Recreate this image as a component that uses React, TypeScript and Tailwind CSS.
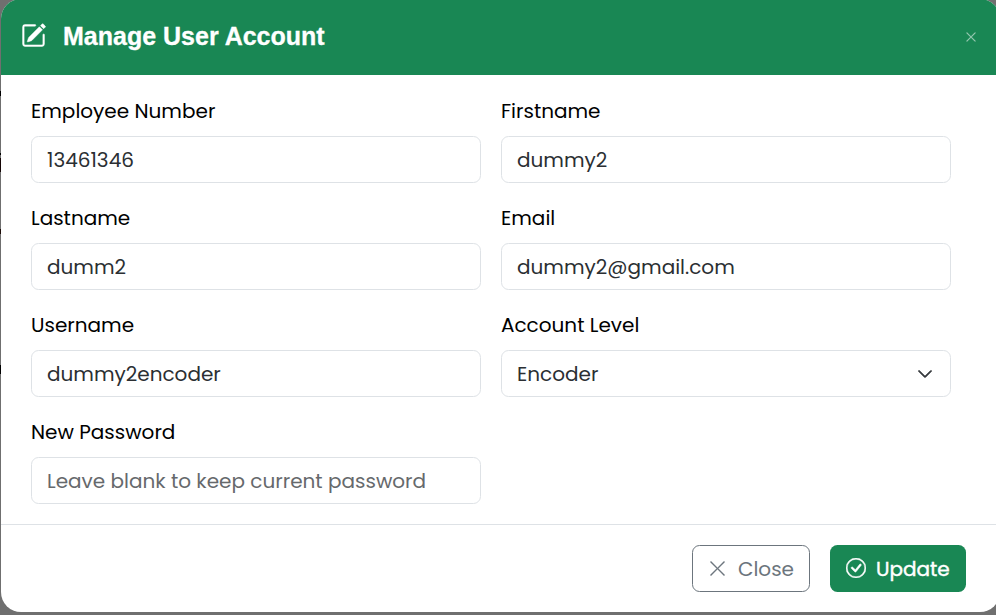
import React from "react";
import { BsCheckCircle, BsChevronDown, BsPencilSquare, BsXLg } from "react-icons/bs";

type TextProps = { children: React.ReactNode; className?: string };

function Label({ children }: TextProps) {
  return <label className="flex h-[30px] items-center text-black">{children}</label>;
}

function Box({ children, className = "" }: TextProps) {
  return (
    <div className="mt-[10px] flex h-[47px] items-center justify-between rounded-[7.5px] border border-[#dee2e6] px-[15px] text-[#2b2f33]">
      <span className={className}>{children}</span>
    </div>
  );
}

export default function App() {
  return (
    <div className="relative h-[615px] w-[996px] overflow-hidden bg-[#6f6f6f] font-['Poppins','Inter',sans-serif] text-[20px] leading-[30px] whitespace-nowrap">
      {/* Slivers of the dimmed page behind the dialog */}
      <div className="absolute top-[91px] left-0 h-[5px] w-px bg-black" />
      <div className="absolute top-[153px] left-0 h-[2px] w-px bg-black" />
      <div className="absolute top-[158px] left-0 h-[14px] w-px bg-[#140505]" />
      <div className="absolute top-[229px] left-0 h-[5px] w-px bg-[#1c0c08]" />
      <div className="absolute top-[365px] left-0 h-[9px] w-px bg-black" />
      <div className="-mt-px ml-px flex h-[613px] w-[999px] flex-col overflow-hidden rounded-[20px] bg-white">
        <header className="flex h-[76px] shrink-0 items-center bg-[#198754] pr-[27px] pl-[21px] text-white">
          <BsPencilSquare className="-mt-[4px] -ml-px size-[25px]" strokeWidth={0.3} />
          <h1 className="ml-[17px] -mt-[3px] font-['Liberation_Sans',Arial,sans-serif] text-[25px] font-bold [-webkit-text-stroke:0.3px_white]">
            Manage User Account
          </h1>
          <BsXLg className="mr-[-4px] ml-auto size-[12px] text-[#a3d0ba]" strokeWidth={0.4} />
        </header>

        <main className="grid h-[449px] shrink-0 grid-cols-[450px_450px] content-start gap-x-5 gap-y-5 pt-[21px] pl-[30px]">
          <div>
            <Label>Employee Number</Label>
            <Box>13461346</Box>
          </div>
          <div>
            <Label>Firstname</Label>
            <Box>dummy2</Box>
          </div>
          <div>
            <Label>Lastname</Label>
            <Box>dumm2</Box>
          </div>
          <div>
            <Label>Email</Label>
            <Box>dummy2@gmail.com</Box>
          </div>
          <div>
            <Label>Username</Label>
            <Box>dummy2encoder</Box>
          </div>
          <div>
            <Label>Account Level</Label>
            <div className="mt-[10px] flex h-[47px] items-center justify-between rounded-[7.5px] border border-[#dee2e6] pr-[17px] pl-[15px] text-[#2b2f33]">
              <span>Encoder</span>
              <BsChevronDown className="size-4" strokeWidth={0.9} />
            </div>
          </div>
          <div>
            <Label>New Password</Label>
            <Box className="text-[#66696c]">Leave blank to keep current password</Box>
          </div>
        </main>

        <footer className="flex grow items-center justify-end gap-5 border-t border-[#dee2e6] pr-[34px]">
          <button className="flex h-[47px] w-[118px] items-center rounded-[7.5px] border border-[#6c757d] pl-[15px] text-[#6c757d]">
            <BsXLg className="-mt-px size-[19px]" strokeWidth={0.2} />
            <span className="ml-[11px]">Close</span>
          </button>
          <button className="flex h-[47px] w-[136px] items-center rounded-[7.5px] bg-[#198754] pl-[16px] text-white">
            <BsCheckCircle className="-mt-[2px] size-5" strokeWidth={0.4} />
            <span className="ml-[10px] [-webkit-text-stroke:0.4px_white]">Update</span>
          </button>
        </footer>
      </div>
    </div>
  );
}
